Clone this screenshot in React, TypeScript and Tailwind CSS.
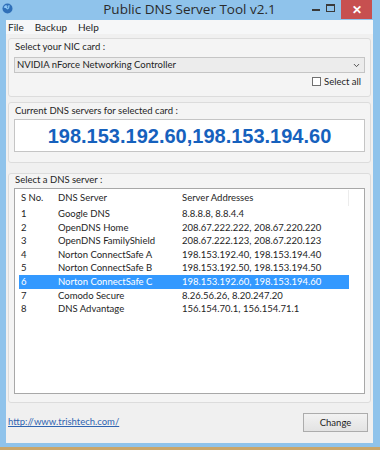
import { ChevronDown } from "lucide-react";

const servers = [
  { no: 1, name: "Google DNS", addr: "8.8.8.8, 8.8.4.4" },
  { no: 2, name: "OpenDNS Home", addr: "208.67.222.222, 208.67.220.220" },
  { no: 3, name: "OpenDNS FamilyShield", addr: "208.67.222.123, 208.67.220.123" },
  { no: 4, name: "Norton ConnectSafe A", addr: "198.153.192.40, 198.153.194.40" },
  { no: 5, name: "Norton ConnectSafe B", addr: "198.153.192.50, 198.153.194.50" },
  { no: 6, name: "Norton ConnectSafe C", addr: "198.153.192.60, 198.153.194.60" },
  { no: 7, name: "Comodo Secure", addr: "8.26.56.26, 8.20.247.20" },
  { no: 8, name: "DNS Advantage", addr: "156.154.70.1, 156.154.71.1" },
];

const selected = 6;

function GlobeIcon() {
  return (
    <svg width="11" height="11" viewBox="0 0 11 11">
      <circle cx="5.5" cy="5.5" r="5" fill="#2f6fb8" />
      <path d="M2 4.5c1-1 2-.5 2.5.5s1.5 1 2 0-.5-2 1-2.5" stroke="#7fc1f0" strokeWidth="1.4" fill="none" />
      <circle cx="4" cy="3.5" r="1.5" fill="#9fd4ff" opacity="0.7" />
    </svg>
  );
}

function GroupBox({ className, children }: { className?: string; children: React.ReactNode }) {
  return (
    <div className={`mx-[2px] rounded-[3px] border border-[#dcdcdc] bg-[#f4f4f4] px-[5px] ${className ?? ""}`}>
      {children}
    </div>
  );
}

export default function App() {
  return (
    <div className="h-[450px] w-[380px] overflow-hidden bg-[#c9a66b] font-['Lato',sans-serif] text-[9.5px] text-[#1e1e1e]">
      <div className="flex h-[447px] flex-col bg-[#8fc3eb] pb-[4px] pl-[6px] pr-[7px]">
        {/* Title bar */}
        <div className="relative flex h-[20px] shrink-0 items-center">
          <div className="absolute left-[-4px] top-[3px]">
            <GlobeIcon />
          </div>
          <div className="flex-1 text-center font-['Open_Sans',sans-serif] text-[13.5px] leading-none text-[#2b2b2b]">
            Public DNS Server Tool v2.1
          </div>
          <div className="absolute right-[-7px] top-0 flex h-[19px] items-start">
            <div className="mr-[6px] mt-[9px] h-[2px] w-[8px] bg-[#3a3a3a]" />
            <div className="mr-[6px] mt-[4px] h-[8px] w-[9px] border border-t-2 border-[#3a3a3a]" />
            <div className="mr-[8px] flex h-[19px] w-[31px] items-center justify-center bg-[#c75050] text-[12px] font-bold text-white">
              ✕
            </div>
          </div>
        </div>

        {/* Client area */}
        <div className="flex flex-1 flex-col bg-[#f0f0f0]">
          {/* Menu */}
          <div className="flex h-[14px] items-center gap-[11px] bg-[#f6f7f8] pl-[2px] text-[10px]">
            <span>File</span>
            <span>Backup</span>
            <span>Help</span>
          </div>

          <GroupBox className="mt-[4px] h-[59px]">
            <div className="h-[14px] pl-[1px] pt-[1px] leading-[14px]">Select your NIC card :</div>
            <div className="mt-[4px] flex h-[16px] items-center justify-between border border-[#c5c5c5] bg-[#ececec] pl-[2px] pr-[3px]">
              <span className="leading-none">NVIDIA nForce Networking Controller</span>
              <ChevronDown size={9} strokeWidth={2.5} className="text-[#444]" />
            </div>
            <div className="mt-[4px] flex items-center justify-end gap-[3px] pr-[4px]">
              <div className="h-[9px] w-[9px] border border-[#707070] bg-white" />
              <span className="leading-none">Select all</span>
            </div>
          </GroupBox>

          <GroupBox className="mt-[5px] h-[61px]">
            <div className="h-[14px] pl-[1px] pt-[1px] leading-[14px]">Current DNS servers for selected card :</div>
            <div className="mt-[2px] flex h-[33px] items-center justify-center border border-[#c5c5c5] bg-white">
              <span className="font-['Liberation_Sans',Arial,sans-serif] text-[20px] font-bold text-[#1661bd]">
                198.153.192.60,198.153.194.60
              </span>
            </div>
          </GroupBox>

          <GroupBox className="mt-[10px] h-[230px]">
            <div className="h-[12px] pl-[1px] leading-[12px]">Select a DNS server :</div>
            <div className="mt-[2px] h-[206px] border border-[#a8a8a8] bg-white px-[4px]">
              <div className="flex h-[17px] items-center pt-[1px]">
                <div className="flex h-full w-[330px] items-center border-r border-[#ececec]">
                  <span className="w-[37px] pl-[2px]">S No.</span>
                  <span className="w-[124px] pl-[2px]">DNS Server</span>
                  <span className="pl-[2px]">Server Addresses</span>
                </div>
              </div>
              <div className="pt-[1px]">
                {servers.map((s) => (
                  <div
                    key={s.no}
                    className={`flex h-[13.6px] w-[330px] items-center leading-none ${
                      s.no === selected ? "bg-[#3399ff] text-white" : ""
                    }`}
                  >
                    <span className="w-[37px] pl-[2px]">{s.no}</span>
                    <span className="w-[124px] pl-[2px]">{s.name}</span>
                    <span className="pl-[2px]">{s.addr}</span>
                  </div>
                ))}
              </div>
            </div>
          </GroupBox>

          <div className="mt-[10px] flex items-center justify-between pl-[2px] pr-[5px]">
            <a href="#" className="text-[#2f64b0] underline">
              http://www.trishtech.com/
            </a>
            <button className="h-[19px] w-[65px] border border-[#acacac] bg-gradient-to-b from-[#f2f2f2] to-[#e3e3e3] leading-none">
              Change
            </button>
          </div>
        </div>
      </div>
    </div>
  );
}
